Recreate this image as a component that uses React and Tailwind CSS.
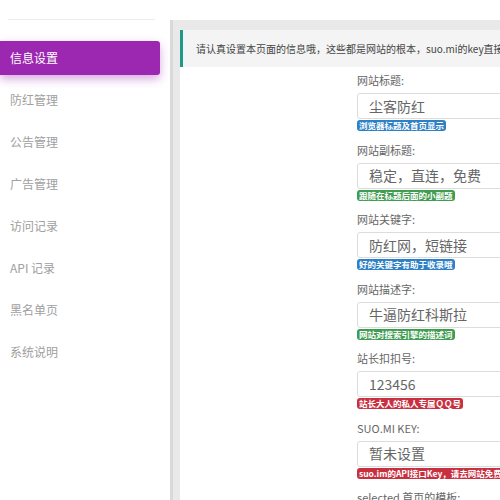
import React from "react";

const font = { fontFamily: '"Noto Sans CJK SC", "Noto Sans", sans-serif' };

const menu = ["信息设置", "防红管理", "公告管理", "广告管理", "访问记录", "API 记录", "黑名单页", "系统说明"];

const fields = [
  { label: "网站标题:", value: "尘客防红", badge: "浏览器标题及首页显示", color: "bg-[#2d7fc6]" },
  { label: "网站副标题:", value: "稳定，直连，免费", badge: "跟随在标题后面的小副题", color: "bg-[#3f9c50]" },
  { label: "网站关键字:", value: "防红网，短链接", badge: "好的关键字有助于收录哦", color: "bg-[#2d7fc6]" },
  { label: "网站描述字:", value: "牛逼防红科斯拉", badge: "网站对搜索引擎的描述词", color: "bg-[#3f9c50]" },
  { label: "站长扣扣号:", value: "123456", badge: "站长大人的私人专属ＱＱ号", color: "bg-[#c8303f]" },
  { label: "SUO.MI KEY:", value: "暂未设置", badge: "suo.im的API接口Key，请去网站免费申请", color: "bg-[#c8303f]" },
];

export default function App() {
  return (
    <div className="flex w-[500px] h-[500px] overflow-hidden bg-white" style={font}>
      <aside className="w-[170px] shrink-0 bg-white pt-[19px]">
        <div className="mx-[8px] w-[147px] h-px bg-[#ececec]" />
        <div className="mt-[21px] flex flex-col gap-[8px]">
          {menu.map((m, i) => (
            <div
              key={m}
              className={
                i === 0
                  ? "w-[160px] h-[34px] flex items-center pl-[10px] text-[12px] text-white bg-[#9c27b0] rounded-r-[3px] shadow-[0_4px_10px_rgba(156,39,176,0.4)]"
                  : "w-[160px] h-[34px] flex items-center pl-[10px] text-[12px] text-[#a0a0a0]"
              }
            >
              {m}
            </div>
          ))}
        </div>
      </aside>
      <main className="flex-1 mt-[20px] bg-[#e9e9e9] border-l-[3px] border-[#d9d9d9] pl-[7px] pt-[10px] flex flex-col min-w-0">
        <div className="h-[37px] shrink-0 bg-[#f4f4f4] border-l-[3px] border-[#1f9a88] flex items-center pl-[13px] text-[10px] text-[#444] whitespace-nowrap overflow-hidden">
          请认真设置本页面的信息哦，这些都是网站的根本，suo.mi的key直接去官网免费申请
        </div>
        <div className="flex-1 bg-white pl-[177px] pt-[6px]">
          {fields.map((f) => (
            <div key={f.label} className="mb-[11.5px]">
              <div className="h-[14px] leading-[14px] text-[11px] text-[#666] mb-[6px] whitespace-nowrap">{f.label}</div>
              <div className="w-[300px] h-[26px] border border-[#dcdcdc] rounded-[3px] flex items-center pl-[11px] text-[14px] text-[#666] whitespace-nowrap">
                {f.value}
              </div>
              <div className="mt-[1px] h-[11px] flex">
                <span className={`${f.color} text-white text-[8.5px] font-bold leading-[11px] px-[2px] rounded-[3px] whitespace-nowrap`}>
                  {f.badge}
                </span>
              </div>
            </div>
          ))}
          <div className="h-[14px] leading-[14px] text-[11px] text-[#666] whitespace-nowrap">selected 首页的模板:</div>
        </div>
      </main>
    </div>
  );
}
